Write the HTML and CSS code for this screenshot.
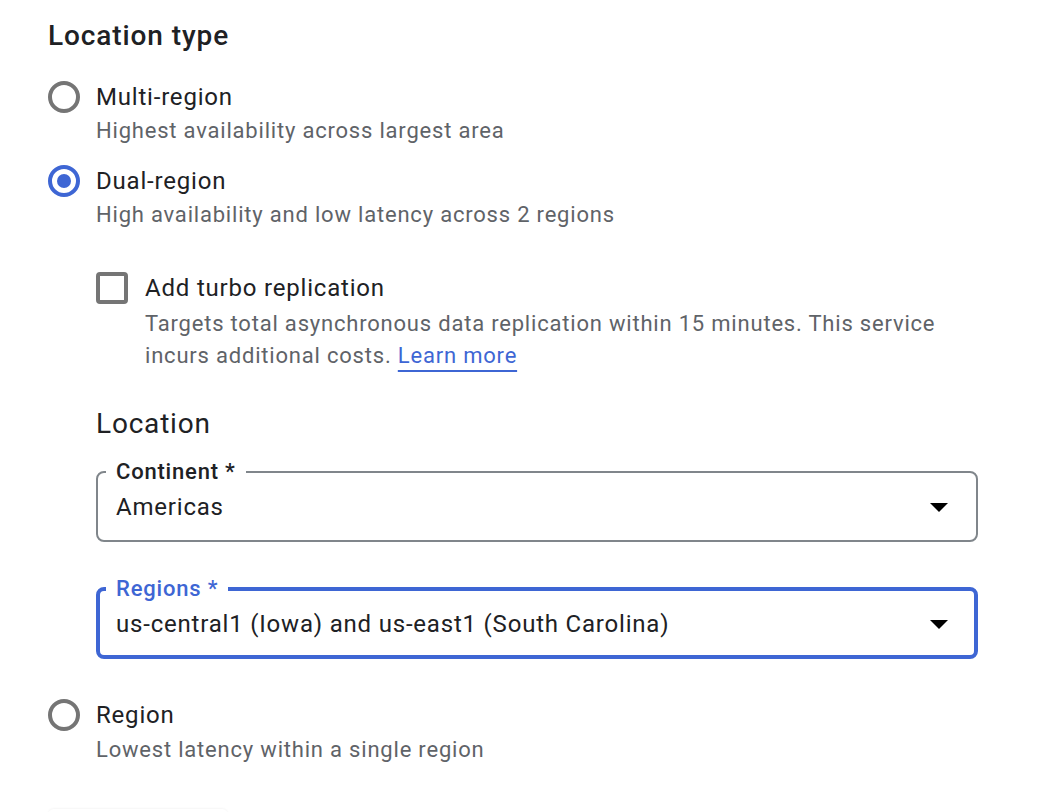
FILE: index.html
```html
<!DOCTYPE html>
<html lang="en">
<head>
<meta charset="utf-8">
<title>Location type</title>
<link rel="stylesheet" href="styles.css">
</head>
<body>
<div class="page">
  <h2 class="title">Location type</h2>

  <div class="option">
    <div class="opt-row">
      <span class="radio"></span>
      <span class="opt-label">Multi-region</span>
    </div>
    <div class="opt-desc">Highest availability across largest area</div>
  </div>

  <div class="option dual">
    <div class="opt-row">
      <span class="radio checked"><span class="dot"></span></span>
      <span class="opt-label">Dual-region</span>
    </div>
    <div class="opt-desc">High availability and low latency across 2 regions</div>

    <div class="nested">
      <div class="check-row">
        <span class="checkbox"></span>
        <span class="opt-label">Add turbo replication</span>
      </div>
      <div class="check-desc">Targets total asynchronous data replication within 15 minutes. This service incurs additional costs. <a class="link" href="#">Learn more</a></div>

      <h3 class="subtitle">Location</h3>

      <fieldset class="field">
        <legend class="field-label">Continent *</legend>
        <div class="field-value">
          <span>Americas</span>
          <span class="arrow"></span>
        </div>
      </fieldset>

      <fieldset class="field focused">
        <legend class="field-label">Regions *</legend>
        <div class="field-value">
          <span>us-central1 (Iowa) and us-east1 (South Carolina)</span>
          <span class="arrow"></span>
        </div>
      </fieldset>
    </div>
  </div>

  <div class="option region">
    <div class="opt-row">
      <span class="radio"></span>
      <span class="opt-label">Region</span>
    </div>
    <div class="opt-desc">Lowest latency within a single region</div>
  </div>

  <div class="bottom-btn"></div>
</div>
</body>
</html>
```

FILE: styles.css
```css
* { box-sizing: border-box; }

html, body {
  margin: 0;
  padding: 0;
  background: #ffffff;
}

body {
  font-family: Roboto, "Noto Sans", "Liberation Sans", sans-serif;
  color: #202124;
  overflow: hidden;
  height: 812px;
}

.page {
  padding: 18px 0 0 48px;
  width: 1060px;
}

.title {
  margin: 0;
  font-size: 28px;
  font-weight: 500;
  line-height: 36px;
  letter-spacing: 0.9px;
  color: #202124;
}

.option {
  margin-top: 26px;
}

.option.dual {
  margin-top: 16px;
}

.option.region {
  margin-top: 39px;
}

.opt-row {
  display: flex;
  align-items: center;
  gap: 16px;
  height: 34px;
}

.radio {
  width: 32px;
  height: 32px;
  border: 4px solid #757575;
  border-radius: 50%;
  display: flex;
  align-items: center;
  justify-content: center;
  flex: none;
}

.radio.checked {
  border-color: #3e66d4;
}

.dot {
  width: 14px;
  height: 14px;
  border-radius: 50%;
  background: #3e66d4;
}

.opt-label {
  font-size: 24px;
  line-height: 34px;
  letter-spacing: 0.8px;
  color: #202124;
}

.opt-desc {
  margin-left: 48px;
  font-size: 22px;
  line-height: 34px;
  letter-spacing: 0.8px;
  color: #5f6368;
}

.region .opt-desc {
  margin-top: 1px;
}

.nested {
  margin-left: 48px;
  width: 882px;
  margin-top: 39px;
}

.check-row {
  display: flex;
  align-items: center;
  gap: 17px;
  height: 34px;
}

.checkbox {
  width: 32px;
  height: 32px;
  border: 4px solid #757575;
  border-radius: 4px;
  flex: none;
}

.check-desc {
  margin: 3px 0 0 49px;
  font-size: 22px;
  line-height: 32px;
  letter-spacing: 0.8px;
  color: #5f6368;
}

.link {
  color: #3e66d4;
  text-decoration: underline;
  text-decoration-thickness: 2px;
  text-underline-offset: 7px;
}

.subtitle {
  margin: 34px 0 0 0;
  font-size: 28px;
  font-weight: 400;
  line-height: 36px;
  letter-spacing: 0.8px;
  color: #202124;
}

.field {
  margin: 18px 0 0 0;
  padding: 0 28px 18px 18px;
  border: 2px solid #80868b;
  border-radius: 8px;
  min-width: 0;
}

.field + .field {
  margin-top: 35px;
}

.field-label {
  margin-left: -10px;
  padding: 0 10px;
  font-size: 22px;
  font-weight: 500;
  line-height: 24px;
  letter-spacing: 0.8px;
  color: #202124;
}

.field-value {
  display: flex;
  align-items: center;
  justify-content: space-between;
  height: 30px;
  margin-top: 8px;
  font-size: 24px;
  line-height: 30px;
  letter-spacing: 0.8px;
  color: #202124;
}

.arrow {
  width: 0;
  height: 0;
  border-left: 9px solid transparent;
  border-right: 9px solid transparent;
  border-top: 9px solid #000000;
  flex: none;
}

.field.focused {
  border: 4px solid #3e66d4;
  padding: 0 26px 16px 16px;
}

.field.focused .field-label {
  color: #3e66d4;
}

.bottom-btn {
  margin-top: 42px;
  width: 180px;
  height: 40px;
  border-radius: 6px;
  box-shadow: 0 -1px 2px rgba(0, 0, 0, 0.04);
}
```
